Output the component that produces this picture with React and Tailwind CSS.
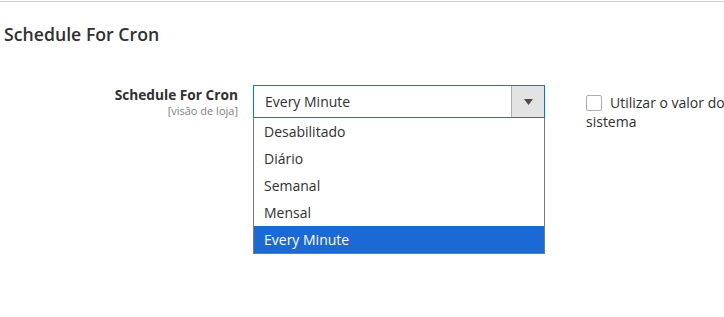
import React from 'react';

const options = ['Desabilitado', 'Diário', 'Semanal', 'Mensal', 'Every Minute'];

export default function App() {
  const selected = 'Every Minute';

  return (
    <div className="w-[724px] h-[317px] bg-white overflow-hidden text-[#303030]" style={{ fontFamily: '"Open Sans", "Liberation Sans", sans-serif' }}>
      <div className="mt-[1px] border-t border-[#cccccc]" />

      <h3 className="pl-[4px] pt-[21px] text-[17.7px] leading-[22px] font-semibold text-[#303030]">
        Schedule For Cron
      </h3>

      <div className="flex mt-[40px]">
        <div className="w-[238px] shrink-0 text-right flex flex-col items-end">
          <div className="text-[13.7px] leading-[19px] font-bold">Schedule For Cron</div>
          <div className="text-[11px] leading-[13px] text-[#808080]">[visão de loja]</div>
        </div>

        <div className="ml-[15px] w-[292px] shrink-0">
          <div className="flex h-[33px] border border-[#007bdb] bg-white">
            <div className="flex-1 pl-[11px] text-[14px] leading-[31px]">{selected}</div>
            <div className="w-[33px] flex items-center justify-center bg-[#e3e3e3] border-l border-[#adadad]">
              <svg width="9" height="6" viewBox="0 0 9 6">
                <path d="M0 0 H9 L4.5 6 Z" fill="#514943" />
              </svg>
            </div>
          </div>
          <ul className="border border-t-0 border-[#7a7a7a] bg-white">
            {options.map((o) => (
              <li
                key={o}
                className={`h-[27px] pl-[10px] text-[14px] leading-[27px] ${o === selected ? 'bg-[#1a69d5] text-white' : ''}`}
              >
                {o}
              </li>
            ))}
          </ul>
        </div>

        <div className="ml-[41px] pt-[8px] text-[14px] leading-[19px] w-[150px] shrink-0">
          <span className="inline-block align-[-3px] w-[16px] h-[16px] border border-[#adadad] rounded-[2px] bg-white mr-[8px]" />
          Utilizar o valor do sistema
        </div>
      </div>
    </div>
  );
}
